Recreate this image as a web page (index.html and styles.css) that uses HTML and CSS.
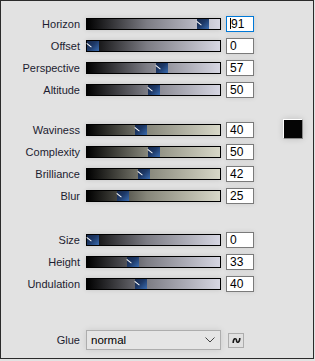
FILE: index.html
```html
<!DOCTYPE html>
<html>
<head>
  <meta charset=utf-8>
  <meta name="viewport" content="width=device-width, initial-scale=1">
  <title>Wave settings</title>
<link rel="stylesheet" href="styles.css">
</head>
<body>

<div class=panel>

  <div class=group>
    <div class=row>
      <span class=label>Horizon</span>
      <div class='track cool'><span class=thumb style='left: 110.11px'></span></div>
      <div class='num focus'><span class=caret></span>91</div>
    </div>
    <div class=row>
      <span class=label>Offset</span>
      <div class='track cool'><span class=thumb style='left: 0px'></span></div>
      <div class=num>0</div>
    </div>
    <div class=row>
      <span class=label>Perspective</span>
      <div class='track cool'><span class=thumb style='left: 68.97px'></span></div>
      <div class=num>57</div>
    </div>
    <div class=row>
      <span class=label>Altitude</span>
      <div class='track cool'><span class=thumb style='left: 60.5px'></span></div>
      <div class=num>50</div>
    </div>
  </div>

  <div class='group g2'>
    <div class=row>
      <span class=label>Waviness</span>
      <div class='track warm'><span class=thumb style='left: 48.4px'></span></div>
      <div class=num>40</div>
      <div class=swatch></div>
    </div>
    <div class=row>
      <span class=label>Complexity</span>
      <div class='track warm'><span class=thumb style='left: 60.5px'></span></div>
      <div class=num>50</div>
    </div>
    <div class=row>
      <span class=label>Brilliance</span>
      <div class='track warm'><span class=thumb style='left: 50.82px'></span></div>
      <div class=num>42</div>
    </div>
    <div class=row>
      <span class=label>Blur</span>
      <div class='track warm'><span class=thumb style='left: 30.25px'></span></div>
      <div class=num>25</div>
    </div>
  </div>

  <div class='group g3'>
    <div class=row>
      <span class=label>Size</span>
      <div class='track cool'><span class=thumb style='left: 0px'></span></div>
      <div class=num>0</div>
    </div>
    <div class=row>
      <span class=label>Height</span>
      <div class='track cool'><span class=thumb style='left: 39.93px'></span></div>
      <div class=num>33</div>
    </div>
    <div class=row>
      <span class=label>Undulation</span>
      <div class='track cool'><span class=thumb style='left: 48.4px'></span></div>
      <div class=num>40</div>
    </div>
  </div>

  <div class='group g4'>
    <div class=row>
      <span class=label>Glue</span>
      <div class=combo>
        <span>normal</span>
        <svg width=10 height=6 viewBox='0 0 10 6'><path d='M0.5 0.5 L5 5 L9.5 0.5' fill=none stroke='#444' stroke-width=1 /></svg>
      </div>
      <div class=sbtn>
        <svg width=9 height=7 viewBox='0 0 9 7'><path d='M1.2 6 C1.2 0.8 4.5 0.8 4.5 3.5 C4.5 6.2 7.8 6.2 7.8 1' fill=none stroke='#1a1a1a' stroke-width=1.6 /></svg>
      </div>
    </div>
  </div>

</div>

</body>
</html>
```

FILE: styles.css
```css
* {
  box-sizing: border-box;
  }
html, body {
  margin: 0;
  padding: 0;
  background-color: #e2e2e2;
  }
.panel {
  width: 314px;
  height: 359px;
  padding-top: 12px;
  border: 1px solid #2b2b2b;
  background-color: #e2e2e2;
  font: normal 11px "Liberation Sans", Arial, sans-serif;
  color: #1c1c30;
  }
.group.g2 {
  margin-top: 18px;
  }
.group.g3 {
  margin-top: 22px;
  }
.group.g4 {
  margin-top: 34px;
  }
.row {
  display: flex;
  align-items: center;
  height: 22px;
  }
.label {
  width: 79px;
  text-align: right;
  white-space: pre;
  }
.track {
  position: relative;
  width: 135px;
  height: 12px;
  margin-left: 6px;
  border: 1px solid #000;
  box-shadow: 0 0 5px rgba(0,0,0,0.12);
  }
.track.cool {
  background: linear-gradient(to right, #000 0%, #7c7c84 45%, #d6d6e2 100%);
  }
.track.warm {
  background: linear-gradient(to right, #000 0%, #86867a 45%, #d8d8c8 100%);
  }
.thumb {
  position: absolute;
  top: 0;
  width: 12px;
  height: 10px;
  background: linear-gradient(135deg, #16284a 0%, #1d3866 45%, #3a6cb0 100%);
  }
.thumb::after {
  content: '';
  position: absolute;
  top: 2px;
  left: 0;
  width: 6px;
  height: 1px;
  background-color: #fff;
  transform: rotate(38deg);
  transform-origin: 0 0;
  }
.num {
  width: 28px;
  height: 16px;
  margin-left: 5px;
  padding: 1px 0 0 3px;
  border: 1px solid #7a7a7a;
  background-color: #fff;
  color: #000;
  font-size: 12px;
  line-height: 13px;
  box-shadow: 0 0 5px rgba(0,0,0,0.1);
  }
.num.focus {
  border-color: #0078d7;
  }
.caret {
  display: inline-block;
  width: 1px;
  height: 11px;
  margin-right: 0;
  vertical-align: -1px;
  background-color: #000;
  }
.swatch {
  align-self: flex-start;
  width: 20px;
  height: 20px;
  margin-left: 29px;
  background-color: #050505;
  border: 1px solid #fff;
  border-right-color: #8a8a8a;
  border-bottom-color: #8a8a8a;
  box-shadow: 0 0 6px rgba(0,0,0,0.15);
  }
.combo {
  display: flex;
  align-items: center;
  justify-content: space-between;
  width: 135px;
  height: 20px;
  margin-left: 6px;
  padding: 0 5px 0 4px;
  border: 1px solid #adadad;
  background-color: #e5e5e5;
  color: #000;
  font-size: 11.5px;
  box-shadow: 0 0 6px rgba(0,0,0,0.1);
  }
.sbtn {
  display: flex;
  align-items: center;
  justify-content: center;
  width: 16px;
  height: 15px;
  margin-left: 7px;
  border: 1px solid #adadad;
  background-color: #e1e1e1;
  }
```
